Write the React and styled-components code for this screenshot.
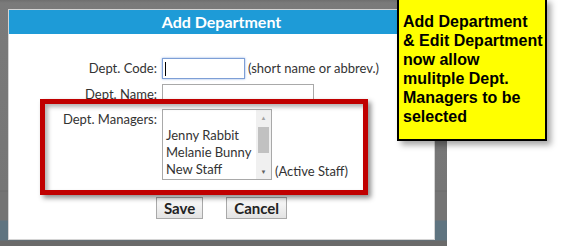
import styled, { createGlobalStyle } from "styled-components";

const GlobalStyle = createGlobalStyle`
  html, body {
    margin: 0;
    padding: 0;
    background: #ffffff;
  }
`;

function App() {
  return (
    <Page>
      <GlobalStyle />
      <Backdrop>
        <Dialog>
          <Header>Add Department</Header>
          <Form>
            <Label>Dept. Code:</Label>
            <Field>
              <Input width={83} focused>
                <Caret />
              </Input>
              <Hint>(short name or abbrev.)</Hint>
            </Field>

            <Label>Dept. Name:</Label>
            <Field>
              <Input width={152} />
            </Field>

            <Label top>Dept. Managers:</Label>
            <Field bottom>
              <ListBox>
                <Options>
                  <Option />
                  <Option>Jenny Rabbit</Option>
                  <Option>Melanie Bunny</Option>
                  <Option>New Staff</Option>
                </Options>
                <ScrollBar>
                  <Arrow dim>▲</Arrow>
                  <Track>
                    <Thumb />
                  </Track>
                  <Arrow>▼</Arrow>
                </ScrollBar>
              </ListBox>
              <Hint>(Active Staff)</Hint>
            </Field>
          </Form>
          <Buttons>
            <Button>Save</Button>
            <Button>Cancel</Button>
          </Buttons>
        </Dialog>
      </Backdrop>

      <Highlight />
      <Callout>
        Add Department
        <br />& Edit Department
        <br />now allow
        <br />mulitple Dept.
        <br />Managers to be
        <br />selected
      </Callout>
    </Page>
  );
}

const Page = styled.div`
  position: relative;
  width: 561px;
  height: 246px;
  overflow: hidden;
  display: flex;
  background: #ffffff;
`;

const Backdrop = styled.div`
  width: 447px;
  height: 246px;
  padding: 9px 0 0 8px;
  box-sizing: border-box;
  background: linear-gradient(
    to bottom,
    #6f6f6f 0px,
    #7a7a7a 3px,
    #767676 190px,
    #6c6c6c 191px,
    #747474 192px,
    #747474 220px,
    #5f7480 221px,
    #5f7480 240px,
    #6a6a6a 241px
  );
`;

const Dialog = styled.div`
  width: 427px;
  height: 231px;
  box-sizing: border-box;
  border: 1px solid #d4d4d4;
  background: #ffffff;
  display: flex;
  flex-direction: column;
`;

const Header = styled.div`
  height: 24px;
  background: #1e9bd7;
  color: #ffffff;
  font-family: Lato, "Open Sans", sans-serif;
  font-weight: 700;
  font-size: 16px;
  line-height: 24px;
  text-align: center;
`;

const Form = styled.div`
  margin-top: 24px;
  display: grid;
  grid-template-columns: 148px 1fr;
  column-gap: 5px;
  row-gap: 5px;
  font-family: Lato, "Open Sans", sans-serif;
  font-size: 13px;
  color: #333333;
`;

const Label = styled.div`
  text-align: right;
  align-self: ${(p) => (p.top ? "start" : "center")};
  padding-top: ${(p) => (p.top ? "2px" : "0")};
  line-height: 17px;
`;

const Field = styled.div`
  display: flex;
  align-items: ${(p) => (p.bottom ? "flex-end" : "center")};
  gap: 3px;
`;

const Input = styled.div`
  width: ${(p) => p.width}px;
  height: ${(p) => (p.focused ? 21 : 20)}px;
  box-sizing: border-box;
  border: 1px solid ${(p) => (p.focused ? "#7e9fd6" : "#a9a9a9")};
  box-shadow: ${(p) => (p.focused ? "0 0 2px rgba(90, 140, 220, 0.7)" : "none")};
  background: #ffffff;
  display: flex;
  align-items: center;
  padding-left: 2px;
`;

const Caret = styled.span`
  width: 1px;
  height: 14px;
  background: #000000;
`;

const Hint = styled.span`
  line-height: 17px;
  white-space: nowrap;
`;

const ListBox = styled.div`
  width: 110px;
  height: 71px;
  box-sizing: border-box;
  border: 1px solid #a9a9a9;
  display: flex;
  background: #ffffff;
`;

const Options = styled.div`
  flex: 1;
  padding-left: 3px;
`;

const Option = styled.div`
  height: 17px;
  line-height: 17px;
  white-space: nowrap;
`;

const ScrollBar = styled.div`
  width: 15px;
  background: #f0f0f0;
  display: flex;
  flex-direction: column;
`;

const Arrow = styled.div`
  height: 15px;
  font-size: 6px;
  line-height: 15px;
  text-align: center;
  color: ${(p) => (p.dim ? "#a3a3a3" : "#606060")};
`;

const Track = styled.div`
  flex: 1;
  padding: 2px 2px 0 2px;
`;

const Thumb = styled.div`
  height: 26px;
  background: #c1c1c1;
`;

const Buttons = styled.div`
  margin-top: 17px;
  display: flex;
  justify-content: center;
  gap: 23px;
`;

const Button = styled.button`
  height: 22px;
  padding: 0 7px;
  border: 1px solid #a9a9a9;
  border-radius: 0;
  background: linear-gradient(to bottom, #fbfbfb, #e3e3e3);
  font-family: Lato, "Open Sans", sans-serif;
  font-weight: 700;
  font-size: 15px;
  line-height: 20px;
  color: #222222;
`;

const Highlight = styled.div`
  position: absolute;
  left: 40px;
  top: 99px;
  width: 328px;
  height: 96px;
  box-sizing: border-box;
  border: 5px solid #c00000;
  box-shadow: 3px 3px 5px rgba(0, 0, 0, 0.45),
    inset 3px 3px 4px rgba(0, 0, 0, 0.3);
  pointer-events: none;
`;

const Callout = styled.div`
  position: absolute;
  left: 397px;
  top: -2px;
  width: 150px;
  height: 143px;
  box-sizing: border-box;
  border: 2px solid #000000;
  background: #ffff00;
  box-shadow: 4px 4px 6px rgba(0, 0, 0, 0.35);
  padding: 12px 0 0 4px;
  font-family: "Liberation Sans", Arial, sans-serif;
  font-weight: 700;
  font-size: 16px;
  line-height: 19px;
  color: #000000;
  white-space: nowrap;
`;

export default App;
